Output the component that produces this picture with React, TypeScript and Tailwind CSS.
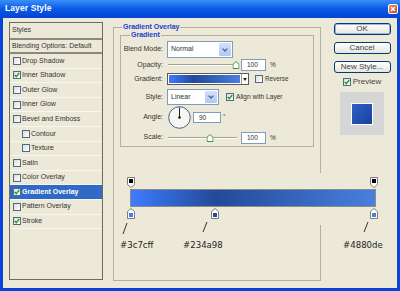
import React from 'react'

const styleRows = [
  { name: 'Drop Shadow', checked: false },
  { name: 'Inner Shadow', checked: true },
  { name: 'Outer Glow', checked: false },
  { name: 'Inner Glow', checked: false },
  { name: 'Bevel and Emboss', checked: false },
  { name: 'Contour', checked: false, indent: true },
  { name: 'Texture', checked: false, indent: true },
  { name: 'Satin', checked: false },
  { name: 'Color Overlay', checked: false },
  { name: 'Gradient Overlay', checked: true, active: true },
  { name: 'Pattern Overlay', checked: false },
  { name: 'Stroke', checked: true },
]

const stripe = 'linear-gradient(to right, #3c7cff 0%, #234a98 35%, #4880de 100%)'

function Check({ checked }: { checked?: boolean }) {
  return (
    <span className="w-[8px] h-[8px] border border-[#4d6a8e] bg-linear-to-br from-[#dedcd2] to-white flex items-center justify-center shrink-0">
      {checked && (
        <svg width="6" height="6" viewBox="0 0 6 6">
          <path d="M0.7 2.9 L2.3 4.6 L5.3 1" stroke="#21a121" strokeWidth="1.4" fill="none" />
        </svg>
      )}
    </span>
  )
}

function Chevron() {
  return (
    <svg width="6" height="4" viewBox="0 0 6 4">
      <path d="M0.6 0.6 L3 3 L5.4 0.6" stroke="#4d6185" strokeWidth="1.3" fill="none" />
    </svg>
  )
}

function Thumb() {
  return (
    <svg width="7" height="8" viewBox="0 0 7 8">
      <path d="M0.5 7.5 V3.2 L3.5 0.6 L6.5 3.2 V7.5 Z" fill="#fff" stroke="#3b9a3b" strokeWidth="1" />
    </svg>
  )
}

function Slider({ pos }: { pos: number }) {
  return (
    <div className="relative w-[72px] h-full flex items-center">
      <div className="ml-[1px] w-[69px] h-[2px] border-t border-[#a4a297] border-b border-b-white" />
      <div className="absolute top-1/2 -translate-y-1/2 -translate-x-1/2 flex" style={{ left: pos }}>
        <Thumb />
      </div>
    </div>
  )
}

function Field({ value, className }: { value: string; className: string }) {
  return (
    <div className={`bg-white border border-[#7f9db9] flex items-center pl-[5px] text-[6.5px] text-[#333] ${className}`}>
      {value}
    </div>
  )
}

function StopTop({ left }: { left: number }) {
  return (
    <svg className="absolute top-0" style={{ left }} width="8" height="11" viewBox="0 0 8 11">
      <path d="M0.5 0.5 H7.5 V7.5 L4 10.5 L0.5 7.5 Z" fill="#fff" stroke="#7c7c7c" />
      <rect x="2" y="2" width="4" height="4" fill="#000" />
    </svg>
  )
}

function StopBottom({ left, color }: { left: number; color: string }) {
  return (
    <svg className="absolute top-0" style={{ left }} width="8" height="11" viewBox="0 0 8 11">
      <path d="M4 0.5 L7.5 3.5 V10.5 H0.5 V3.5 Z" fill="#fff" stroke="#7c7c7c" />
      <rect x="2" y="5" width="4" height="4" fill={color} />
    </svg>
  )
}

function XpButton({ label, primary }: { label: string; primary?: boolean }) {
  return (
    <div
      className={`h-[12px] w-[57px] rounded-[3px] border border-[#003c74] bg-linear-to-b from-white to-[#e6e5de] flex items-center justify-center text-[8px] text-[#444] ${
        primary ? 'shadow-[inset_0_0_0_1px_#9ab6e8]' : ''
      }`}
    >
      {label}
    </div>
  )
}

export default function App() {
  return (
    <div className="w-[400px] h-[291px] bg-[#0a43d8] flex flex-col overflow-hidden font-['Liberation_Sans',Arial,sans-serif]">
      {/* title bar */}
      <div className="h-[17px] flex items-center justify-between pl-[5px] pr-[2px] bg-linear-to-b from-[#3c8ef9] via-[#0a5ae8] to-[#0545d4]">
        <span className="text-white font-bold text-[8.5px] tracking-[0.1px]">Layer Style</span>
        <div className="w-[10px] h-[10px] rounded-[2px] border border-white bg-linear-to-br from-[#f08a6c] to-[#d0401c] flex items-center justify-center">
          <svg width="6" height="6" viewBox="0 0 6 6">
            <path d="M1 1 L5 5 M5 1 L1 5" stroke="#fff" strokeWidth="1.4" />
          </svg>
        </div>
      </div>

      <div className="flex-1 mx-[3px] mt-[1px] mb-[3px] bg-[#ece9d8] relative flex items-start text-[#333]">
        {/* styles list */}
        <div className="ml-[6px] mt-[4px] w-[94px] h-[258px] border border-[#6f6d62] flex flex-col text-[7px]">
          <div className="h-[17px] flex items-center pl-[2px] border-b-2 border-[#8c8a7c]">Styles</div>
          <div className="h-[14px] flex items-center pl-[2px] border-b-2 border-[#8c8a7c]">Blending Options: Default</div>
          {styleRows.map((row) => (
            <div
              key={row.name}
              className={`h-[14.6px] flex items-center gap-[1px] border-b border-[#f7f6f0] ${row.indent ? 'pl-[12px]' : 'pl-[3px]'} ${
                row.active ? 'bg-[#316ac5] text-white font-bold' : ''
              }`}
            >
              <Check checked={row.checked} />
              <span>{row.name}</span>
            </div>
          ))}
        </div>

        {/* gradient overlay group */}
        <fieldset className="ml-[10px] mt-[5px] w-[208px] h-[258px] border border-[#b3b0a0]">
          <legend className="ml-[8px] px-[1px] text-[7px] leading-[8px] font-bold text-[#1e3ad0]">Gradient Overlay</legend>
          <fieldset className="ml-[6px] w-[194px] border border-[#b3b0a0]">
            <legend className="ml-[9px] px-[1px] text-[7px] leading-[8px] font-bold text-[#1e3ad0]">Gradient</legend>
            <div className="flex flex-col pt-[2px] pb-[2px] text-[7px]">
              <div className="h-[17px] flex items-center">
                <span className="w-[42px] text-right">Blend Mode:</span>
                <div className="ml-[4px] w-[66px] h-[17px] bg-white border border-[#7f9db9] flex items-center p-[1px]">
                  <span className="flex-1 pl-[2px]">Normal</span>
                  <span className="w-[12px] h-full rounded-[1px] bg-linear-to-b from-[#d2e0fc] to-[#b1c8f6] flex items-center justify-center">
                    <Chevron />
                  </span>
                </div>
              </div>
              <div className="h-[14px] flex items-center">
                <span className="w-[42px] text-right">Opacity:</span>
                <div className="ml-[4px] h-full">
                  <Slider pos={69} />
                </div>
                <Field value="100" className="ml-[2px] w-[25px] h-[12px]" />
                <span className="ml-[4px] text-[6.5px]">%</span>
              </div>
              <div className="h-[14px] flex items-center">
                <span className="w-[42px] text-right">Gradient:</span>
                <div className="ml-[4px] h-[12px] flex border border-[#5a5a5a]">
                  <div className="w-[73px] h-full border border-white" style={{ background: stripe }} />
                  <div className="w-[7px] h-full bg-white border-l border-[#9a9a9a] flex items-center justify-center">
                    <svg width="4" height="3" viewBox="0 0 4 3">
                      <path d="M0 0 H4 L2 3 Z" fill="#222" />
                    </svg>
                  </div>
                </div>
                <div className="ml-[6px]">
                  <Check />
                </div>
                <span className="ml-[2px] text-[6.3px]">Reverse</span>
              </div>
              <div className="mt-[3px] h-[16px] flex items-center">
                <span className="w-[42px] text-right">Style:</span>
                <div className="ml-[4px] w-[52px] h-[16px] bg-white border border-[#7f9db9] flex items-center p-[1px]">
                  <span className="flex-1 pl-[2px]">Linear</span>
                  <span className="w-[12px] h-full rounded-[1px] bg-linear-to-b from-[#d2e0fc] to-[#b1c8f6] flex items-center justify-center">
                    <Chevron />
                  </span>
                </div>
                <div className="ml-[7px]">
                  <Check checked />
                </div>
                <span className="ml-[2px] text-[6.6px]">Align with Layer</span>
              </div>
              <div className="mt-[1px] h-[23px] flex items-center">
                <span className="w-[42px] text-right">Angle:</span>
                <svg className="ml-[5px]" width="23" height="23" viewBox="0 0 23 23">
                  <circle cx="11.5" cy="11.5" r="10.8" fill="#f6f6f2" stroke="#4d5c86" strokeWidth="1" />
                  <path d="M11.5 11.5 V1.5" stroke="#222" strokeWidth="1" />
                  <circle cx="11.5" cy="11.5" r="1.3" fill="#111" />
                </svg>
                <Field value="90" className="ml-[2px] w-[28px] h-[11px]" />
                <span className="ml-[2px] self-start mt-[6px] text-[6px]">°</span>
              </div>
              <div className="mt-[2px] h-[13px] flex items-center">
                <span className="w-[42px] text-right">Scale:</span>
                <div className="ml-[4px] h-full">
                  <Slider pos={43} />
                </div>
                <Field value="100" className="ml-[2px] w-[25px] h-[12px]" />
                <span className="ml-[4px] text-[6.5px]">%</span>
              </div>
            </div>
          </fieldset>
        </fieldset>

        {/* buttons */}
        <div className="ml-[12px] mt-[5px] w-[58px] flex flex-col items-center">
          <XpButton label="OK" primary />
          <div className="mt-[7px]">
            <XpButton label="Cancel" />
          </div>
          <div className="mt-[7px]">
            <XpButton label="New Style..." />
          </div>
          <div className="mt-[4px] h-[9px] flex items-center gap-[2px] text-[8px] text-[#444]">
            <Check checked />
            <span>Preview</span>
          </div>
          <div className="mt-[6px] w-[44px] h-[43px] bg-[#d6d6d6] flex items-center justify-center">
            <div className="w-[22px] h-[22px] border border-white bg-linear-to-br from-[#2e62c8] to-[#1c3f9c]" />
          </div>
        </div>

        {/* gradient editor callout */}
        <div className="absolute left-[122px] top-[155px] w-[267px] h-[52px] bg-[#ece9d8] flex flex-col">
          <div className="relative mt-[4px] h-[11px]">
            <StopTop left={2} />
            <StopTop left={245} />
          </div>
          <div className="ml-[5px] mt-[1px] w-[246px] h-[18px] border border-[#8c8c8c]" style={{ background: stripe }} />
          <div className="relative mt-[1px] h-[11px]">
            <StopBottom left={2} color="#3c7cff" />
            <StopBottom left={86} color="#234a98" />
            <StopBottom left={245} color="#4880de" />
          </div>
        </div>
        <div className="absolute left-[115px] top-[203px] w-[277px] h-[32px] text-[8.6px] text-[#1e1e1e] font-['DejaVu_Sans',Verdana,sans-serif]">
          <svg className="absolute left-0 top-0" width="277" height="16" viewBox="0 0 277 16">
            <path d="M9 2 L5 13 M89 1 L85 11 M250 1 L246 11" stroke="#333" strokeWidth="1" />
          </svg>
          <span className="absolute left-[2px] top-[18px]">#3c7cff</span>
          <span className="absolute left-[65px] top-[18px]">#234a98</span>
          <span className="absolute left-[225px] top-[18px]">#4880de</span>
        </div>
      </div>
    </div>
  )
}
